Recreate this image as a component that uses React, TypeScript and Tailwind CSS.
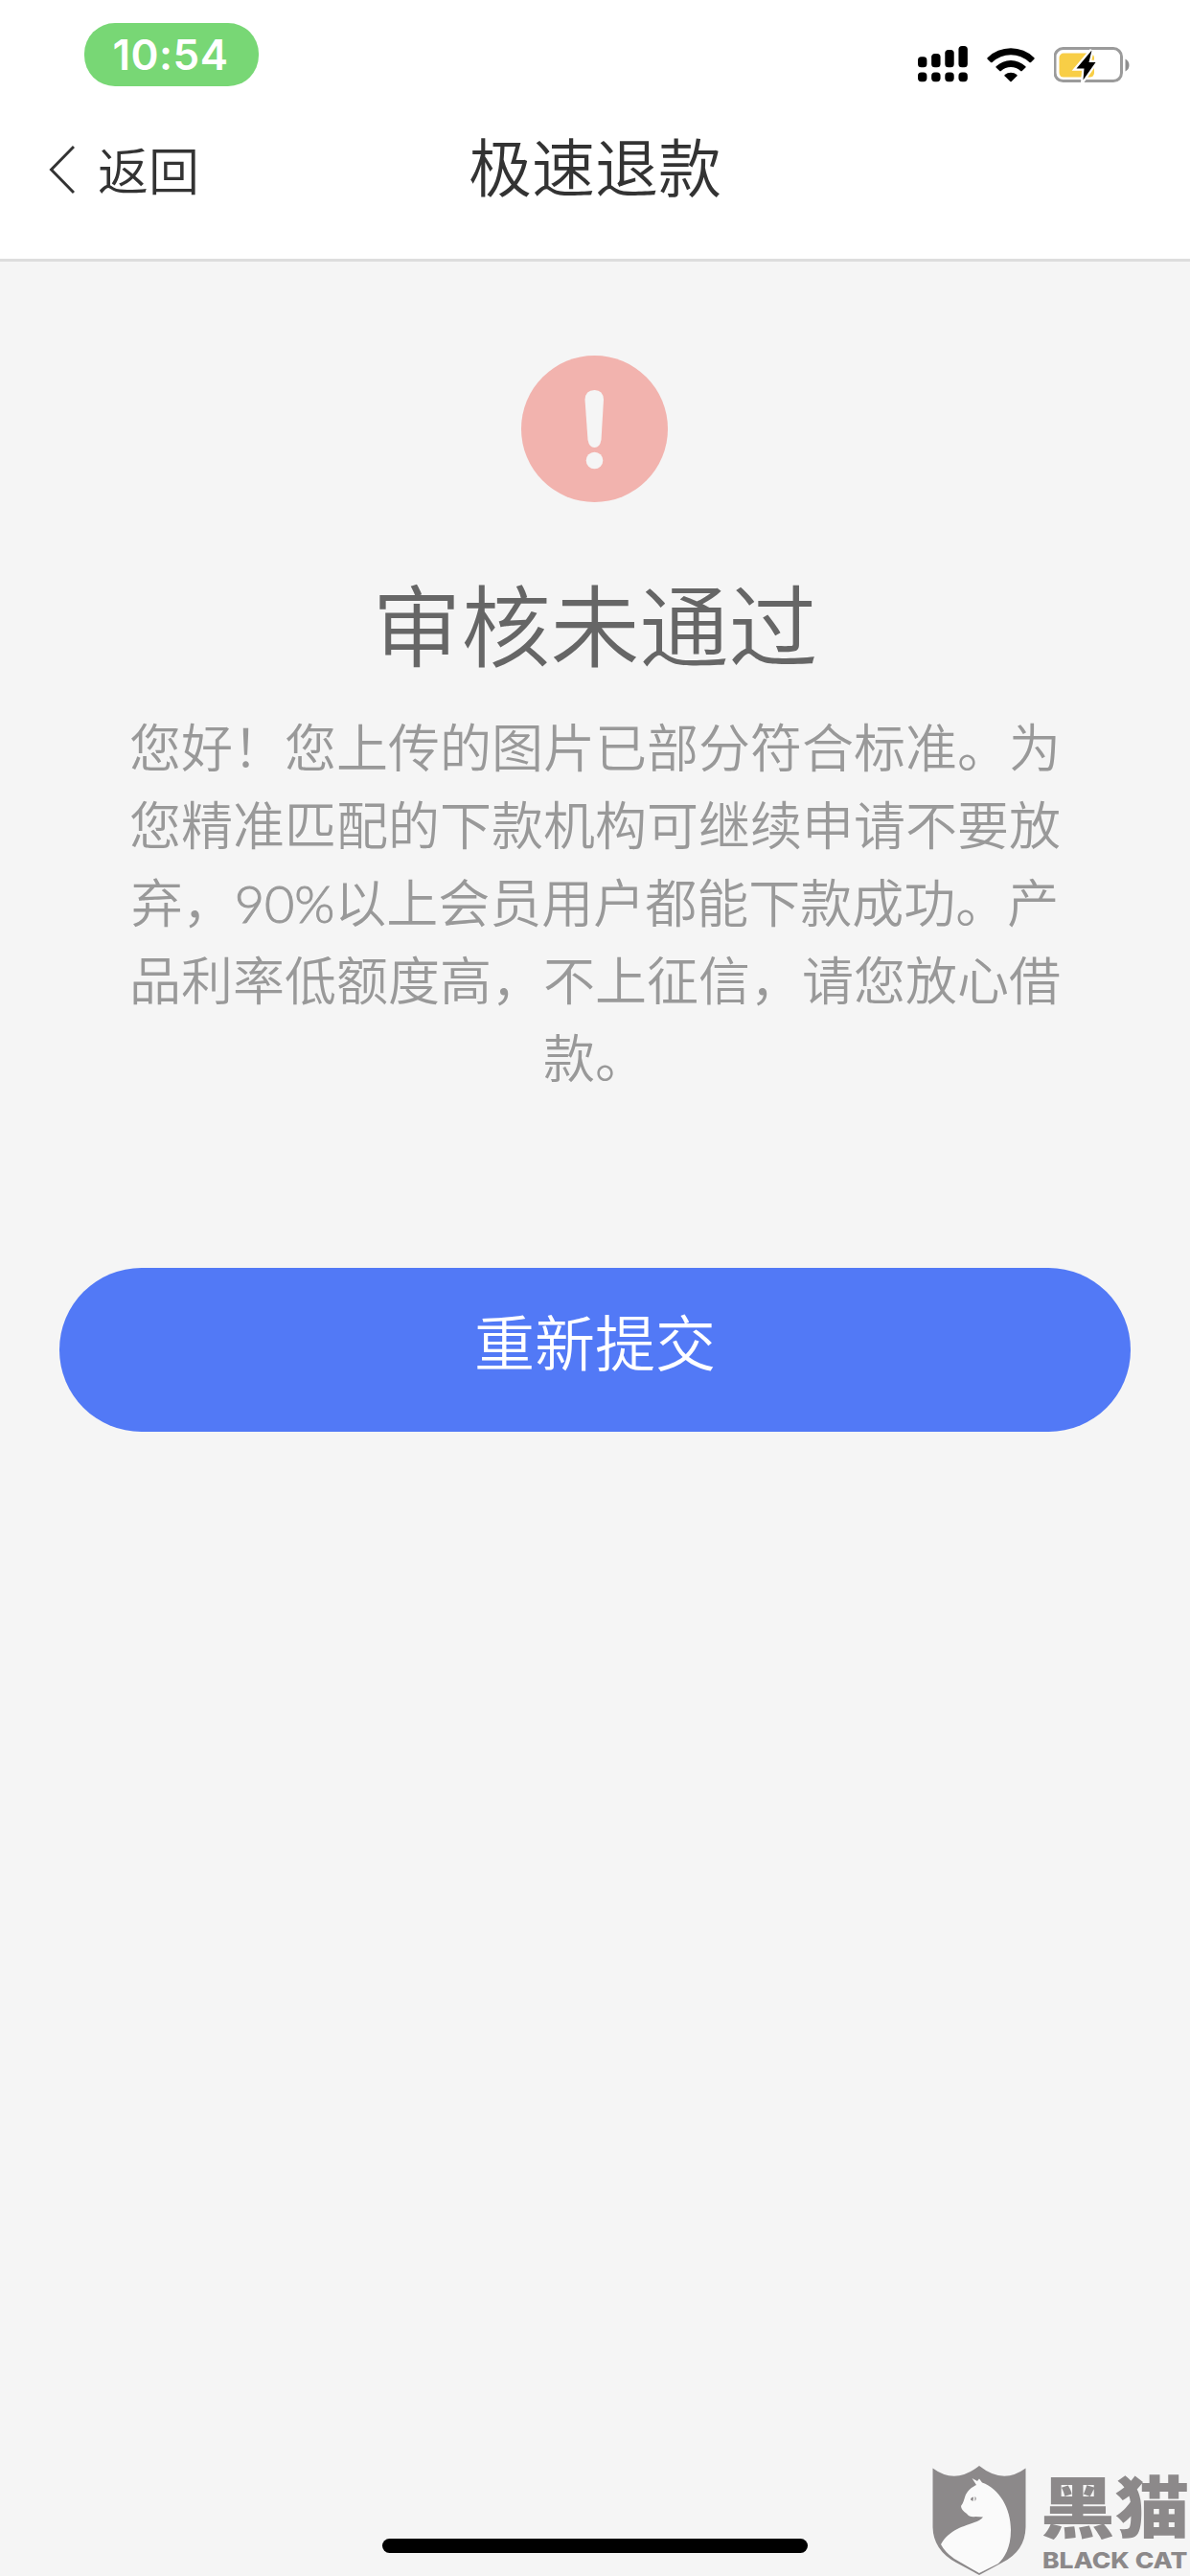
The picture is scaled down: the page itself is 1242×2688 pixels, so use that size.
const lines = [
  '您好！您上传的图片已部分符合标准。为',
  '您精准匹配的下款机构可继续申请不要放',
  '弃，90%以上会员用户都能下款成功。产',
  '品利率低额度高，不上征信，请您放心借',
  '款。',
];

function SignalIcon() {
  const tops = [11.3, 8, 4, 0];
  return (
    <svg width="52" height="38" viewBox="0 0 52 38">
      {tops.map((t, i) => (
        <g key={t}>
          <rect x={i * 14.15} y={t} width="9.4" height={22.3 - t} rx="3.6" />
          <rect x={i * 14.15} y="27.4" width="9.4" height="9.8" rx="3.6" />
        </g>
      ))}
    </svg>
  );
}

function WifiIcon() {
  return (
    <svg width="50" height="37" viewBox="0 0 50 37">
      <path d="M0.6 11.2 A35 35 0 0 1 49.4 11.2 Q50 12 49.3 12.7 L46 16 Q45.2 16.6 44.4 16 A28 28 0 0 0 5.6 16 Q4.8 16.6 4 16 L0.7 12.7 Q0 12 0.6 11.2Z" />
      <path d="M9.6 20.2 A22.5 22.5 0 0 1 40.4 20.2 Q41 20.9 40.4 21.5 L36.7 25.1 Q36 25.7 35.2 25.1 A15 15 0 0 0 14.8 25.1 Q14 25.7 13.3 25.1 L9.6 21.5 Q9 20.9 9.6 20.2Z" />
      <path d="M18.6 29 A10.4 10.4 0 0 1 31.4 29 Q32 29.6 31.4 30.3 L25.7 36 Q25 36.6 24.3 36 L18.6 30.3 Q18 29.6 18.6 29Z" />
    </svg>
  );
}

function BatteryIcon() {
  const bolt = 'M39.5 3.5 L23.5 22.5 L31.5 22.5 L30.5 34.500 L43.5 16 L36.500 16Z';
  return (
    <svg width="82" height="38" viewBox="0 0 82 38">
      <rect x="1" y="1.6" width="69.500" height="34" rx="8.5" fill="none" stroke="#9b9b9b" strokeWidth="3" />
      <rect x="5.500" y="6.6" width="36.5" height="25" rx="4.5" fill="#f8ce46" />
      <path d="M74.500 12.5 Q78.500 14.5 78.500 19 Q78.500 23.5 74.500 25.5Z" fill="#8e8e8e" />
      <path d={bolt} fill="#fff" stroke="#fff" strokeWidth="4.500" />
      <path d={bolt} fill="#000" />
    </svg>
  );
}

function CatShield() {
  return (
    <svg width="98" height="116" viewBox="0 0 98 116">
      <path d="M0.5 2.5 Q24 20 49 0 Q74 20 97.500 2.500 V64 Q97 89 73 101 L49 114 L25 101 Q1 88 0.500 64Z" fill="#8c898a" />
      <path
        d="M41.500 13 L47 16 L49 13.500 L52 17.500 C70 24 82 44 82 67 C82 86 75 96 69 102 L49 112 L23 97 Q13 90 9 82 C18 66 34 63 44 59 Q50 57 53 53.500 L45 53 Q39 54 36 50 Q30 46 30 42 C33 38 33 35 35 30 Q38 24 46 20Z"
        fill="#fafafa"
      />
      <path d="M40 35.500 Q40 33 43 32.500 L42.500 37Z M44.500 32 Q47 34 44.500 37Z" fill="#8c898a" />
    </svg>
  );
}

export default function App() {
  return (
    <div className="relative flex h-[2688px] w-[1242px] flex-col overflow-hidden bg-[#f5f5f5] font-['Noto_Sans_CJK_SC',sans-serif] font-[350]">
      <header className="h-[273px] border-b-[3px] border-[#ddd] bg-white">
        <div className="flex h-[114px] items-start justify-between pr-[60px] pl-[88px] pt-6">
          <div className="flex h-[66px] w-[182px] items-center justify-center rounded-[32px] bg-[#78d775] pr-0.5 font-['Inter',sans-serif] text-[44px] font-semibold tracking-[0.5px] text-white">
            10:54
          </div>
          <div className="flex items-start pt-6">
            <SignalIcon />
            <div className="ml-5 pt-px"><WifiIcon /></div>
            <div className="ml-5 pt-px"><BatteryIcon /></div>
          </div>
        </div>
        <div className="grid h-[130px] grid-cols-[1fr_auto_1fr] items-start text-[#333]">
          <div className="flex items-center gap-6 pt-[35px] pl-[51px]">
            <svg className="mt-0.5" width="27" height="52" viewBox="0 0 27 52" fill="none" stroke="currentColor" strokeWidth="3">
              <path d="M26 2 L2.500 26 L26 50" />
            </svg>
            <span className="text-[53px] leading-[52px]">返回</span>
          </div>
          <h1 className="pt-6 text-[66px] leading-[66px]">极速退款</h1>
          <div />
        </div>
      </header>

      <main className="flex flex-col items-center pt-[98px]">
        <svg width="154" height="154" viewBox="0 0 154 154">
          <circle cx="76.500" cy="76.500" r="76.500" fill="#f2b3ae" />
          <path d="M66.500 46 Q67 36 76.500 36 Q85.500 36 86 46 L83.500 88 Q82 96 76.500 96 Q71 96 69.500 88Z" fill="#f5f5f5" />
          <circle cx="76.500" cy="109.500" r="8.800" fill="#f5f5f5" />
        </svg>
        <h2 className="mt-[69px] text-[93px] leading-[110px] text-[#666]">审核未通过</h2>
        <p className="mt-[33px] text-center text-[54px] leading-[81px] whitespace-nowrap text-[#999]">
          {lines.map((line) => {
            const [before, after] = line.split('90%');
            return (
              <span key={line} className="block h-[81px]">
                {before}
                {after && (
                  <>
                    <span className="font-['Lato',sans-serif] leading-none font-light [-webkit-text-stroke:1px_#999]">90%</span>
                    {after}
                  </>
                )}
              </span>
            );
          })}
        </p>
        <button className="mt-[181px] h-[171px] w-[1118px] rounded-full bg-[#5279f6] pb-[22px] text-[63px] leading-none text-white">
          重新提交
        </button>
      </main>

      <div className="absolute bottom-6 left-[399px] h-[15px] w-[444px] rounded-full bg-black" />

      <div className="absolute right-0 bottom-0 flex h-[116px] w-[269px] items-start text-[#8c898a]">
        <div className="mt-px"><CatShield /></div>
        <div className="ml-[15px] flex flex-col items-start">
          <span className="origin-left scale-x-[1.110] text-[70px] leading-[82px] font-black whitespace-nowrap">黑猫</span>
          <span className="mt-1.5 ml-0.5 origin-left scale-x-[1.150] font-['Inter',sans-serif] text-[23px] leading-[24px] font-extrabold whitespace-nowrap">BLACK CAT</span>
        </div>
      </div>
    </div>
  );
}
